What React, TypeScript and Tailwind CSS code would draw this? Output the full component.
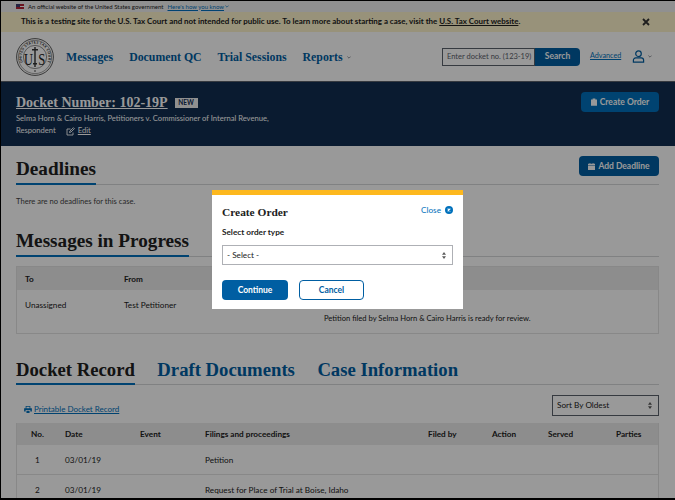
const serif = "font-['Liberation_Serif',serif]";

function Seal() {
  return (
    <svg width="38" height="38" viewBox="0 0 38 38" className="shrink-0">
      <defs>
        <path id="seal-ring" d="M7.4 25.7A13.4 13.4 0 1 1 30.6 25.7" />
      </defs>
      <circle cx="19" cy="19" r="18.4" fill="#fff" stroke="#333" strokeWidth="0.8" />
      <circle cx="19" cy="19" r="16.6" fill="none" stroke="#444" strokeWidth="0.5" />
      <circle cx="19" cy="19" r="11.6" fill="none" stroke="#444" strokeWidth="0.6" />
      <text fontSize="3.5" fontWeight="700" fontFamily="Lato" fill="#222" letterSpacing="0.3" textAnchor="middle">
        <textPath href="#seal-ring" startOffset="50%">UNITED STATES TAX COURT</textPath>
      </text>
      <path d="M18.3 9h1.4v20h-1.4z" fill="#333" />
      <path d="M16 11h6v1.6h-6zM17 25h4v1.5h-4z" fill="#333" />
      <circle cx="19" cy="33" r="0.8" fill="#333" />
      <text x="12.5" y="26.5" textAnchor="middle" fontSize="16" textLength="9" lengthAdjust="spacingAndGlyphs" fontFamily="Liberation Serif" fill="#222">U</text>
      <text x="25.8" y="26.5" textAnchor="middle" fontSize="16" textLength="7" lengthAdjust="spacingAndGlyphs" fontFamily="Liberation Serif" fill="#222">S</text>
    </svg>
  );
}

function Selector({ className = "" }: { className?: string }) {
  return (
    <svg width="4" height="7" viewBox="0 0 4 7" className={className}>
      <path d="M2 0l2 2.7H0zM2 7L0 4.3h4z" fill="#5b5b5b" />
    </svg>
  );
}

function Chevron({ className = "" }: { className?: string }) {
  return (
    <svg width="4" height="3" viewBox="0 0 6 4" className={className}>
      <path d="M.6.6L3 3l2.4-2.4" fill="none" stroke="currentColor" strokeWidth="1" />
    </svg>
  );
}

function Clipboard() {
  return (
    <svg width="6" height="8" viewBox="0 0 8 10" fill="currentColor">
      <path d="M0 1.5h2.2V.4h3.6v1.1H8V10H0z" />
    </svg>
  );
}

function Calendar() {
  return (
    <svg width="7" height="7" viewBox="0 0 9 9" fill="currentColor">
      <path d="M0 1h2V0h1v1h3V0h1v1h2v2H0zM0 3.6h9V9H0z" />
    </svg>
  );
}

function Printer() {
  return (
    <svg width="8" height="7" viewBox="0 0 10 9" fill="currentColor">
      <path d="M2 0h6v3H7V1H3v2H2zM0 3h10v4H8V5H2v2H0zM3 6h4v3H3z" />
    </svg>
  );
}

function SectionTitle({ children }: { children: React.ReactNode }) {
  return (
    <div className="border-b border-[#d6d7d9]">
      <h2 className={`${serif} -mb-px inline-block border-b-2 border-[#0071bc] pb-[2px] text-[19.2px] leading-[25px] font-bold text-[#212121]`}>
        {children}
      </h2>
    </div>
  );
}

export default function App() {
  return (
    <div className="relative h-[500px] w-[675px] overflow-hidden bg-white font-['Lato',sans-serif] text-[#212121]">
      {/* gov banner */}
      <div className="flex h-3 items-center bg-[#f0f0f0] pl-4 text-[6px]">
        <div className="h-[5px] w-2 bg-[linear-gradient(#b22234_40%,#fff_40%,#fff_55%,#b22234_55%)]">
          <div className="h-[3px] w-1 bg-[#3c3b6e]" />
        </div>
        <span className="ml-1">An official website of the United States government</span>
        <span className="ml-1 text-[#0071bc] underline">Here's how you know</span>
        <Chevron className="ml-px text-[#0071bc]" />
      </div>

      {/* testing notice */}
      <div className="flex h-[20px] items-center justify-between bg-[#fdf3cb] pr-[25px] pl-[21px] text-[7.95px] font-bold">
        <span>
          This is a testing site for the U.S. Tax Court and not intended for public use. To learn more about starting
          a case, visit the <span className="underline">U.S. Tax Court website</span>.
        </span>
        <svg width="8" height="8" viewBox="0 0 8 8" className="shrink-0">
          <path d="M1 1l6 6M7 1L1 7" stroke="#333" strokeWidth="1.8" />
        </svg>
      </div>

      {/* main nav */}
      <header className="flex h-[50px] items-center border-b border-[#5b616b] bg-white pr-[23px] pl-4">
        <Seal />
        <nav className={`${serif} mt-[2px] ml-[12px] flex items-center gap-4 text-[11.8px] font-bold text-[#005ea2]`}>
          <span>Messages</span>
          <span>Document QC</span>
          <span>Trial Sessions</span>
          <span className="flex items-center gap-1">
            Reports <Chevron className="text-[#5b616b]" />
          </span>
        </nav>
        <div className="ml-auto flex h-[18px] items-stretch">
          <div className="flex w-[93px] items-center border border-[#5b616b] pl-1 text-[7.5px] whitespace-nowrap text-[#5b616b]">
            Enter docket no. (123-19)
          </div>
          <div className="flex w-[45px] items-center justify-center rounded-r-sm bg-[#005ea2] text-[8.5px] font-bold text-white">
            Search
          </div>
        </div>
        <span className="ml-[10px] w-[30px] text-[7.2px] text-[#0071bc] underline">Advanced</span>
        <svg width="13" height="13" viewBox="0 0 14 14" className="ml-[12px]" fill="none" stroke="#005ea2" strokeWidth="1.3">
          <circle cx="7" cy="4" r="3" />
          <path d="M1.5 13v-2a2.5 2.5 0 012.5-2.5h6a2.5 2.5 0 012.5 2.5v2z" />
        </svg>
        <Chevron className="ml-[3px] text-[#5b616b]" />
      </header>

      {/* case header */}
      <section className="flex h-[64px] items-start justify-between bg-[#112e51] pt-[11px] pr-[16px] pl-4 text-white">
        <div>
          <div className="flex items-center gap-[7px]">
            <span className={`${serif} text-[14px] leading-[20px] font-bold underline`}>Docket Number: 102-19P</span>
            <span className="flex h-[10px] w-[23px] items-center justify-center bg-[#f1f1f1] text-[6.5px] font-bold text-[#112e51]">NEW</span>
          </div>
          <p className="-mt-px w-[262px] text-[7.6px] leading-[12px]">
            Selma Horn &amp; Cairo Harris, Petitioners v. Commissioner of Internal Revenue, Respondent
            <svg width="9" height="9" viewBox="0 0 9 9" className="mr-[3px] ml-[10px] inline" fill="none" stroke="currentColor">
              <path d="M7 5.5V8H1V2h3.5M3.5 5.5l.4-1.4L7.4.7l1 1-3.5 3.4z" strokeWidth="0.9" />
            </svg>
            <span className="underline">Edit</span>
          </p>
        </div>
        <div className="-mt-px flex h-[20px] w-[78px] items-center justify-center gap-[3px] rounded-sm bg-[#0071bc] text-[8.5px] font-bold">
          <Clipboard /> Create Order
        </div>
      </section>

      <main className="px-4">
        {/* deadlines */}
        <div className="pt-[10px]">
          <SectionTitle>Deadlines</SectionTitle>
        </div>
        <p className="mt-[10px] text-[7.6px] leading-[12px] text-[#444]">There are no deadlines for this case.</p>

        {/* messages */}
        <div className="mt-[21px]">
          <SectionTitle>Messages in Progress</SectionTitle>
        </div>
        <div className="mt-[9px] h-[68px] border border-[#e3e3e3] text-[8.2px] leading-[12px]">
          <div className="flex h-[23px] items-center bg-[#ebebeb] pl-[8px] font-bold">
            <span className="w-[99px]">To</span>
            <span>From</span>
          </div>
          <div className="flex pt-[9px] pl-[8px]">
            <span className="w-[99px]">Unassigned</span>
            <span className="w-[200px]">Test Petitioner</span>
            <span className="mt-[13px] text-[7.6px]">Petition filed by Selma Horn &amp; Cairo Harris is ready for review.</span>
          </div>
        </div>

        {/* tabs */}
        <div className={`${serif} mt-[23px] flex gap-[22.5px] border-b border-[#d6d7d9] text-[18.7px] leading-[26px] font-bold text-[#005ea2]`}>
          <span className="-mb-px border-b-2 border-[#0071bc] text-[#212121]">Docket Record</span>
          <span>Draft Documents</span>
          <span>Case Information</span>
        </div>

        <div className="mt-[10px] flex h-[21px] items-center justify-between">
          <span className="mt-[7px] ml-[8px] flex items-center gap-[2px] text-[8px] text-[#0071bc]">
            <Printer />
            <span className="underline">Printable Docket Record</span>
          </span>
          <div className="flex h-[21px] w-[107px] items-center justify-between border border-[#5b616b] px-1 text-[8.2px]">
            Sort By Oldest
            <Selector className="mr-0.5" />
          </div>
        </div>

        {/* docket table */}
        <div className="mt-[7px] border-x border-[#e3e3e3] text-[8.2px]">
          <div className="grid h-[22px] grid-cols-[48px_75px_65px_223px_64px_56px_68px_1fr] items-center bg-[#ebebeb] font-bold">
            <span className="pl-[14px]">No.</span>
            <span>Date</span>
            <span>Event</span>
            <span>Filings and proceedings</span>
            <span>Filed by</span>
            <span>Action</span>
            <span>Served</span>
            <span>Parties</span>
          </div>
          <div className="grid h-[30px] grid-cols-[48px_75px_65px_1fr] items-center border-b border-[#e3e3e3] pt-px">
            <span className="pl-[18px]">1</span>
            <span>03/01/19</span>
            <span />
            <span>Petition</span>
          </div>
          <div className="grid h-[30px] grid-cols-[48px_75px_65px_1fr] items-center">
            <span className="pl-[18px]">2</span>
            <span>03/01/19</span>
            <span />
            <span>Request for Place of Trial at Boise, Idaho</span>
          </div>
        </div>
      </main>

      {/* add deadline sits over the section rule */}
      <div className="absolute top-[156px] right-[16px] flex h-[20px] w-[80px] items-center justify-center gap-[3px] rounded-sm bg-[#005ea2] text-[8.5px] font-bold text-white">
        <Calendar /> Add Deadline
      </div>

      {/* overlay + modal */}
      <div className="absolute inset-0 border-t border-b-2 border-l border-black bg-black/40">
        <div className="absolute top-[189px] left-[211px] h-[119px] w-[251px] border-t-[5px] border-[#fdb81e] bg-white px-[10px] pt-[10px]">
          <div className="flex items-start justify-between">
            <h3 className={`${serif} text-[11.4px] leading-[14px] font-bold text-[#212121]`}>Create Order</h3>
            <span className="-mt-px flex items-center gap-[4px] text-[8.2px] leading-[12px] text-[#0071bc]">
              Close
              <svg width="8" height="8" viewBox="0 0 9 9">
                <circle cx="4.5" cy="4.5" r="4.5" fill="#0071bc" />
                <path d="M3 3l3 3M6 3L3 6" stroke="#fff" strokeWidth="1.2" />
              </svg>
            </span>
          </div>
          <p className="mt-[7px] text-[8.2px] leading-[12px] font-bold">Select order type</p>
          <div className="mt-[7px] flex h-[20px] items-center justify-between border border-[#aeb0b5] px-1 text-[8.2px]">
            - Select -
            <Selector className="mr-0.5" />
          </div>
          <div className="mt-[15px] flex gap-[11px]">
            <div className="flex h-[20px] w-[66px] items-center justify-center rounded-sm bg-[#005ea2] text-[8.5px] font-bold text-white">
              Continue
            </div>
            <div className="flex h-[20px] w-[65px] items-center justify-center rounded-sm border border-[#005ea2] text-[8.5px] font-bold text-[#005ea2]">
              Cancel
            </div>
          </div>
        </div>
      </div>
    </div>
  );
}
